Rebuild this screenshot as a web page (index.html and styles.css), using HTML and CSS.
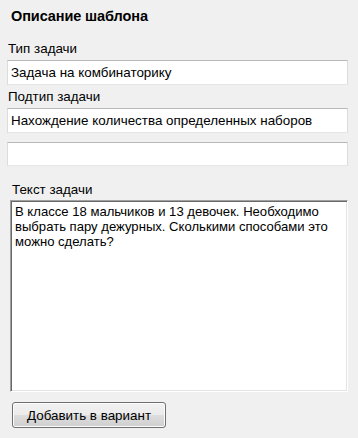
FILE: index.html
```html
<!DOCTYPE html>
<html lang="ru">
<head>
<meta charset="utf-8">
<link rel="stylesheet" href="styles.css">
</head>
<body>
<div class="panel">
  <div class="title">Описание шаблона</div>
  <div class="label">Тип задачи</div>
  <div class="textbox">Задача на комбинаторику</div>
  <div class="label">Подтип задачи</div>
  <div class="textbox">Нахождение количества определенных наборов</div>
  <div class="textbox empty"></div>
  <div class="label text-label">Текст задачи</div>
  <div class="memo">В классе 18 мальчиков и 13 девочек. Необходимо выбрать пару дежурных. Сколькими способами это можно сделать?</div>
  <div class="actions"><button class="btn">Добавить в вариант</button></div>
</div>
</body>
</html>
```
FILE: styles.css
```css
html, body {
  margin: 0;
  padding: 0;
  background: #f0f0f0;
}
body {
  width: 358px;
  height: 438px;
  overflow: hidden;
  font-family: "Liberation Sans", Arial, sans-serif;
  font-size: 13.4px;
  color: #000;
}
.panel {
  padding: 8px 10px 0 7px;
  display: flex;
  flex-direction: column;
  width: 341px;
}
.title {
  font-weight: bold;
  font-size: 14.5px;
  line-height: 16px;
  padding-left: 4px;
  margin-bottom: 17px;
  letter-spacing: -0.1px;
}
.label {
  line-height: 16px;
  padding-left: 1px;
  margin-bottom: 3px;
}
.textbox {
  box-sizing: border-box;
  height: 25px;
  background: #fff;
  border: 1px solid #dcdcdc;
  border-top-color: #b8b8b8;
  border-bottom-color: #e6e6e6;
  padding: 0 0 0 3px;
  line-height: 23px;
  white-space: nowrap;
  overflow: hidden;
  margin-bottom: 4px;
}
.textbox.empty {
  margin-top: 5px;
  height: 24px;
}
.text-label {
  margin-top: 12px;
  padding-left: 5px;
  margin-bottom: 2px;
}
.memo {
  margin-left: 3px;
  box-sizing: border-box;
  width: 338px;
  height: 192px;
  background: #fff;
  border: 1px solid;
  border-color: #a0a0a0 #ffffff #ffffff #a0a0a0;
  box-shadow: inset 1px 1px 0 #696969, inset -1px -1px 0 #e3e3e3;
  padding: 3px 4px 0 4px;
  font-size: 13.1px;
  line-height: 15px;
}
.actions {
  padding: 10px 0 0 5px;
}
.btn {
  width: 154px;
  height: 26px;
  font-family: "Liberation Sans", Arial, sans-serif;
  font-size: 13.4px;
  color: #000;
  border: 1px solid #707070;
  border-radius: 3px;
  background: linear-gradient(#f2f2f2 0%, #ebebeb 50%, #dddddd 51%, #cfcfcf 100%);
  box-shadow: inset 0 0 0 1px #fcfcfc;
  padding: 0;
}
```
